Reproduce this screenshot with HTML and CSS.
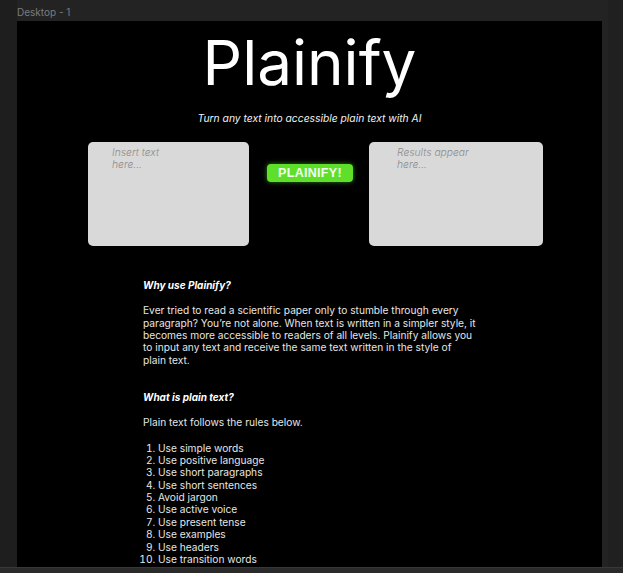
FILE: index.html
```html
<!DOCTYPE html>
<html lang="en">
<head>
<meta charset="utf-8">
<title>Plainify</title>
<link rel="stylesheet" href="styles.css">
</head>
<body>
<div class="canvas">
  <div class="frame-label">Desktop - 1</div>
  <main class="frame">
    <h1 class="title">Plainify</h1>
    <p class="tagline">Turn any text into accessible plain text with AI</p>

    <div class="tool">
      <div class="box box-input"><span class="placeholder">Insert text here...</span></div>
      <button class="go">PLAINIFY!</button>
      <div class="box box-output"><span class="placeholder">Results appear here...</span></div>
    </div>

    <section class="info">
      <h2 class="heading">Why use Plainify?</h2>
      <p class="para">Ever tried to read a scientific paper only to stumble through every paragraph? You’re not alone. When text is written in a simpler style, it becomes more accessible to readers of all levels. Plainify allows you to input any text and receive the same text written in the style of plain&nbsp;text.</p>

      <h2 class="heading heading-second">What is plain text?</h2>
      <p class="para">Plain text follows the rules below.</p>
      <ol class="rules">
        <li>Use simple words</li>
        <li>Use positive language</li>
        <li>Use short paragraphs</li>
        <li>Use short sentences</li>
        <li>Avoid jargon</li>
        <li>Use active voice</li>
        <li>Use present tense</li>
        <li>Use examples</li>
        <li>Use headers</li>
        <li>Use transition words</li>
      </ol>
    </section>
  </main>
  <div class="bottom-bar"></div>
</div>
</body>
</html>
```

FILE: styles.css
```css
html, body {
  margin: 0;
  padding: 0;
  height: 100%;
  overflow: hidden;
}

body {
  background: #1e1e1e;
  font-family: Inter, "Noto Sans", sans-serif;
}

.canvas {
  height: 573px;
  display: flex;
  flex-direction: column;
  background: linear-gradient(to right, #1e1e1e 0 17px, #232323 17px 608px, #202020 608px);
}

.frame-label {
  height: 21px;
  padding-left: 17px;
  box-sizing: border-box;
  padding-top: 6px;
  font-size: 10px;
  line-height: 13px;
  color: #7b7b7b;
}

.frame {
  margin-left: 17px;
  width: 585px;
  height: 546px;
  flex: none;
  background: #000;
  overflow: hidden;
  color: #e6e6e6;
}

.bottom-bar {
  flex: 1;
  background: #2a2a2a;
  border-top: 1px solid #383838;
}

.title {
  margin: 6px 0 0;
  text-align: center;
  font-weight: 400;
  font-size: 62px;
  line-height: 72px;
  color: #fff;
}

.tagline {
  margin: 13px 0 0;
  text-align: center;
  font-style: italic;
  font-size: 10.3px;
  line-height: 13px;
  color: #f2f2f2;
}

.tool {
  margin: 17px 0 0 71px;
  display: flex;
  align-items: flex-start;
}

.box {
  height: 104px;
  background: #d9d9d9;
  border-radius: 5px;
  box-sizing: border-box;
  padding-top: 4px;
}

.box-input {
  width: 161px;
  padding-left: 24px;
}

.box-output {
  width: 174px;
  margin-left: 16px;
  padding-left: 28px;
}

.placeholder {
  display: block;
  width: 62px;
  font-style: italic;
  font-weight: 300;
  font-size: 10.3px;
  line-height: 12px;
  color: #8c8c8c;
}

.box-output .placeholder {
  width: 80px;
}

.go {
  margin: 22px 0 0 18px;
  width: 86px;
  height: 18px;
  padding: 0;
  border: none;
  border-radius: 4px;
  background: #5ee02b;
  box-shadow: 0 0 5px rgba(94, 224, 43, 0.55);
  color: #f4fff0;
  font-family: "Liberation Sans", Arial, sans-serif;
  font-weight: 700;
  font-size: 12.5px;
  letter-spacing: 0.3px;
}

.info {
  margin: 33px 0 0 126px;
  width: 334px;
  font-size: 10.2px;
  line-height: 12.35px;
}

.heading {
  margin: 0;
  font-size: 10px;
  font-weight: 700;
  font-style: italic;
  line-height: 12.35px;
  color: #fff;
}

.heading-second {
  margin-top: 25px;
}

.para {
  margin: 13px 0 0;
}

.rules {
  margin: 13px 0 0;
  padding-left: 15px;
}
```
